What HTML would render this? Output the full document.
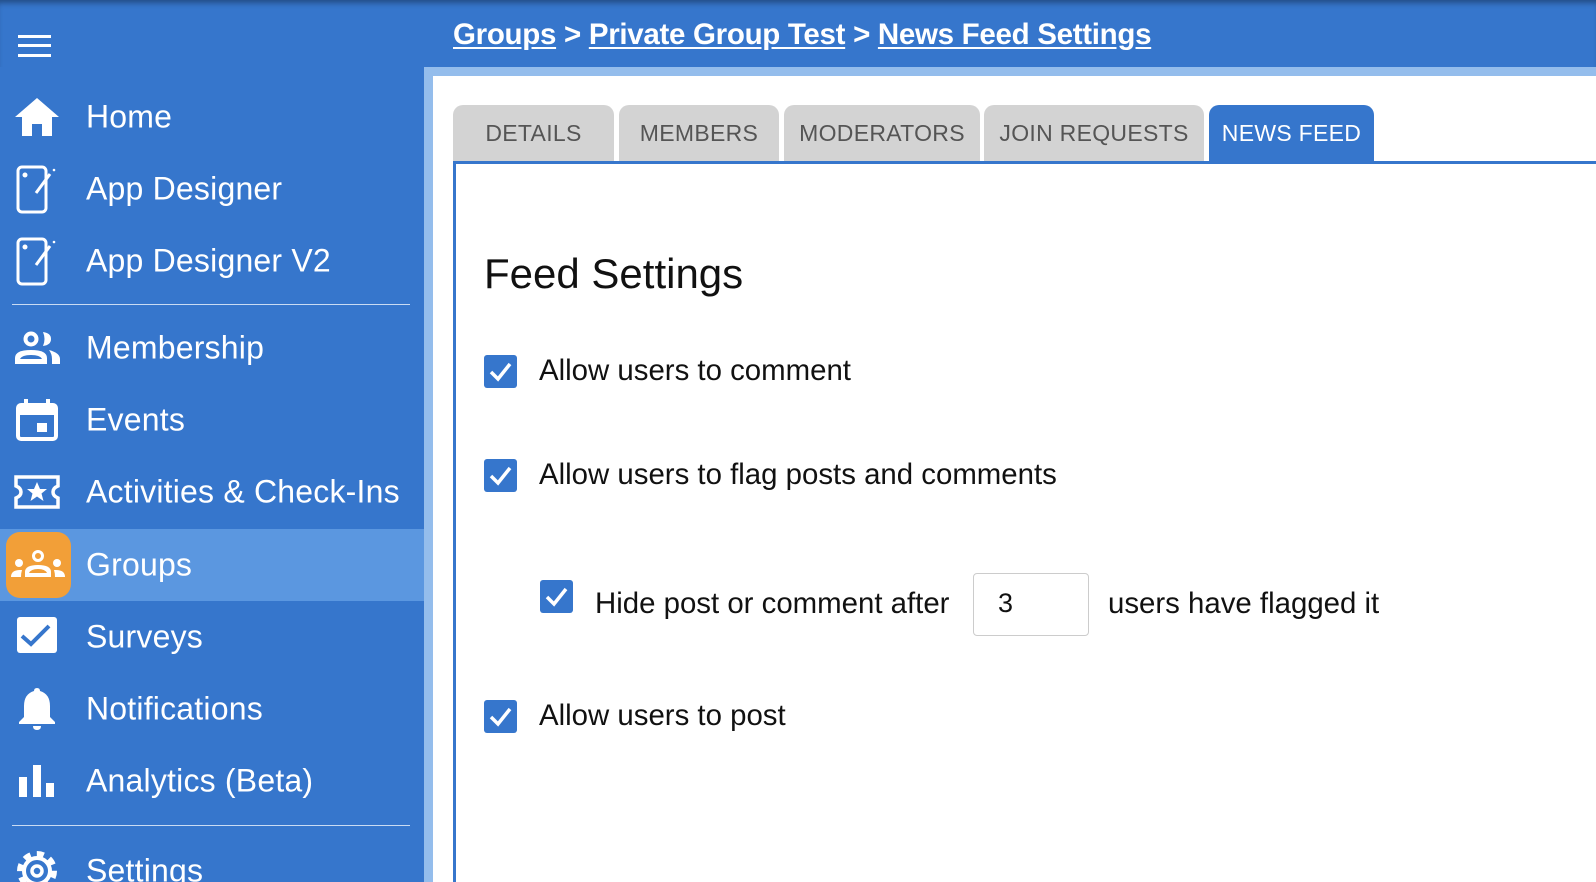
<!DOCTYPE html>
<html><head><meta charset="utf-8"><style>
*{margin:0;padding:0;box-sizing:border-box}
html,body{width:1596px;height:882px;overflow:hidden}
body{background:#fff;font-family:"Liberation Sans",sans-serif;position:relative}
.top{position:absolute;left:0;top:0;width:1596px;height:67px;background:#3676cc;box-shadow:inset 0 6px 6px -3px rgba(0,0,0,.35)}
.crumb{position:absolute;left:453px;top:18px;color:#fff;font-size:29.5px;font-weight:bold;letter-spacing:-0.3px}
.crumb a{color:#fff;text-decoration:underline;text-underline-offset:3px}
.frame{position:absolute;left:424px;top:67px;width:1172px;height:815px;background:#94bdec}
.white{position:absolute;left:433px;top:76px;width:1163px;height:806px;background:#fff}
.side{position:absolute;left:0;top:67px;width:424px;height:815px;background:#3676cc;overflow:hidden}
.item{position:absolute;left:0;width:424px;height:72px;color:#fff;font-size:32px;letter-spacing:0.2px}
.item span{position:absolute;left:86px;top:50%;transform:translateY(-50%)}
.item svg{position:absolute;left:14px;top:50%;transform:translateY(-50%)}
.hl{background:#5b97e0}
.div{position:absolute;left:12px;width:398px;height:1px;background:#c9dbf3}
.tab{position:absolute;top:105px;height:56px;background:#d3d3d3;border-radius:10px 10px 0 0;color:#555;font-size:23px;text-align:center;line-height:56px;letter-spacing:.3px}
.tab.on{background:#3676cc;color:#fff}
.panel{position:absolute;left:453px;top:161px;width:1143px;height:721px;border-left:3px solid #3676cc;border-top:3px solid #3676cc}
h1{position:absolute;left:484px;top:250px;font-size:42px;font-weight:normal;color:#111}
.cb{position:absolute;width:33px;height:33px;background:#3676cc;border-radius:3px}
.lbl{position:absolute;font-size:29.4px;color:#111}
.inp{position:absolute;left:973px;top:573px;width:116px;height:63px;border:1px solid #ccc;border-radius:4px;font-size:27px;padding:14px 0 0 24px;color:#111}
</style></head><body>
<div class="top"></div>
<div class="crumb"><a>Groups</a> &gt; <a>Private Group Test</a> &gt; <a>News Feed Settings</a></div>
<svg style="position:absolute;left:18px;top:35px" width="33" height="22"><rect y="0" width="33" height="3" fill="#fff"/><rect y="9" width="33" height="3" fill="#fff"/><rect y="19" width="33" height="3" fill="#fff"/></svg>
<div class="frame"></div><div class="white"></div>
<div class="side">
<div class="item" style="top:14px"><svg width="46" height="40" viewBox="0 0 46 40"><path d="M23 1 L45 20 H38 V39 H28 V27 H18 V39 H8 V20 H1 Z" fill="#fff"/></svg><span>Home</span></div>
<div class="item" style="top:86px"><svg width="46" height="50" viewBox="0 0 46 50"><rect x="4" y="3" width="28" height="45" rx="4" fill="none" stroke="#fff" stroke-width="3"/><circle cx="11" cy="11" r="2.5" fill="#fff"/><path d="M22 29 L36 10" stroke="#fff" stroke-width="3"/><circle cx="40" cy="6" r="1.3" fill="#fff"/></svg><span>App Designer</span></div>
<div class="item" style="top:158px"><svg width="46" height="50" viewBox="0 0 46 50"><rect x="4" y="3" width="28" height="45" rx="4" fill="none" stroke="#fff" stroke-width="3"/><circle cx="11" cy="11" r="2.5" fill="#fff"/><path d="M22 29 L36 10" stroke="#fff" stroke-width="3"/><circle cx="40" cy="6" r="1.3" fill="#fff"/></svg><span>App Designer V2</span></div>
<div class="div" style="top:237px"></div>
<div class="item" style="top:245px"><svg width="46" height="34" viewBox="0 0 46 34"><circle cx="17" cy="8" r="5.5" fill="none" stroke="#fff" stroke-width="4"/><path d="M1 33 V27 Q1 19 17 19 Q33 19 33 27 V33 Z" fill="#fff"/><path d="M6 28 Q8 24 17 24 Q26 24 28 28 Z" fill="#3676cc"/><path d="M29 1 Q37 2 37 8 Q37 14 29 15 Q32 8 29 1Z" fill="#fff"/><path d="M35 19 Q46 22 46 28 V33 H38 V28 Q38 23 35 19Z" fill="#fff"/></svg><span>Membership</span></div>
<div class="item" style="top:317px"><svg width="46" height="42" viewBox="0 0 46 42"><rect x="4" y="6" width="38" height="34" rx="3" fill="none" stroke="#fff" stroke-width="4"/><rect x="4" y="6" width="38" height="10" fill="#fff"/><rect x="10" y="0" width="4" height="8" fill="#fff"/><rect x="32" y="0" width="4" height="8" fill="#fff"/><rect x="23" y="24" width="10" height="9" fill="#fff"/></svg><span>Events</span></div>
<div class="item" style="top:389px"><svg width="46" height="34" viewBox="0 0 46 34"><path d="M2 2 H44 V11 Q39 13 39 17 Q39 21 44 23 V32 H2 V23 Q7 21 7 17 Q7 13 2 11 Z" fill="none" stroke="#fff" stroke-width="3.5"/><path d="M23 7 L26 14 L33 14 L27.5 18.5 L29.5 26 L23 21.5 L16.5 26 L18.5 18.5 L13 14 L20 14Z" fill="#fff"/></svg><span>Activities &amp; Check-Ins</span></div>
<div class="item hl" style="top:462px"><div style="position:absolute;left:6px;top:3px;width:65px;height:66px;background:#f29f38;border-radius:14px"></div><svg style="left:10px" width="56" height="30" viewBox="0 0 56 30"><circle cx="28" cy="6" r="4.5" fill="none" stroke="#fff" stroke-width="3"/><path d="M15 27 V22 Q15 15 28 15 Q41 15 41 22 V27Z" fill="#fff"/><path d="M19 23 Q21 19 28 19 Q35 19 37 23Z" fill="#f29f38"/><circle cx="9" cy="13" r="4" fill="#fff"/><circle cx="47" cy="13" r="4" fill="#fff"/><path d="M1 27 Q1 20 10 20 L12 20 Q11 23 11 27Z" fill="#fff"/><path d="M55 27 Q55 20 46 20 L44 20 Q45 23 45 27Z" fill="#fff"/></svg><span>Groups</span></div>
<div class="item" style="top:534px"><svg width="46" height="40" viewBox="0 0 46 40"><rect x="3" y="0" width="40" height="36" rx="3" fill="#fff"/><path d="M8 19 L17 27 L35 9" fill="none" stroke="#3676cc" stroke-width="4"/></svg><span>Surveys</span></div>
<div class="item" style="top:606px"><svg width="46" height="42" viewBox="0 0 46 42"><path d="M23 0 Q26 0 26 3 Q36 6 36 18 V29 L41 34 V36 H5 V34 L10 29 V18 Q10 6 20 3 Q20 0 23 0Z" fill="#fff"/><path d="M19 38 H27 Q27 42 23 42 Q19 42 19 38Z" fill="#fff"/></svg><span>Notifications</span></div>
<div class="item" style="top:678px"><svg width="46" height="34" viewBox="0 0 46 34"><rect x="5" y="13" width="8" height="20" fill="#fff"/><rect x="19" y="1" width="8" height="32" fill="#fff"/><rect x="32" y="19" width="8" height="14" fill="#fff"/></svg><span>Analytics (Beta)</span></div>
<div class="div" style="top:758px"></div>
<div class="item" style="top:768px"><svg width="46" height="46" viewBox="0 0 46 46"><circle cx="23" cy="23" r="17" fill="none" stroke="#fff" stroke-width="6" stroke-dasharray="7 6.3"/><circle cx="23" cy="23" r="13" fill="none" stroke="#fff" stroke-width="4"/><circle cx="23" cy="23" r="5" fill="none" stroke="#fff" stroke-width="3.5"/></svg><span>Settings</span></div>
</div>

<div class="tab" style="left:453px;width:161px">DETAILS</div>
<div class="tab" style="left:619px;width:160px">MEMBERS</div>
<div class="tab" style="left:784px;width:196px">MODERATORS</div>
<div class="tab" style="left:984px;width:220px">JOIN REQUESTS</div>
<div class="tab on" style="left:1209px;width:165px">NEWS FEED</div>
<div class="panel"></div>
<h1>Feed Settings</h1>
<svg width="0" height="0" style="position:absolute"><defs><path id="ck" d="M7 17 L14 24 L26 9" fill="none" stroke="#fff" stroke-width="3.5"/></defs></svg>
<div class="cb" style="left:484px;top:355px"><svg width="33" height="33"><use href="#ck"/></svg></div>
<div class="lbl" style="left:539px;top:354px">Allow users to comment</div>
<div class="cb" style="left:484px;top:459px"><svg width="33" height="33"><use href="#ck"/></svg></div>
<div class="lbl" style="left:539px;top:458px">Allow users to flag posts and comments</div>
<div class="cb" style="left:540px;top:580px"><svg width="33" height="33"><use href="#ck"/></svg></div>
<div class="lbl" style="left:595px;top:587px">Hide post or comment after</div>
<div class="inp">3</div>
<div class="lbl" style="left:1108px;top:587px">users have flagged it</div>
<div class="cb" style="left:484px;top:700px"><svg width="33" height="33"><use href="#ck"/></svg></div>
<div class="lbl" style="left:539px;top:699px">Allow users to post</div>
</body></html>
